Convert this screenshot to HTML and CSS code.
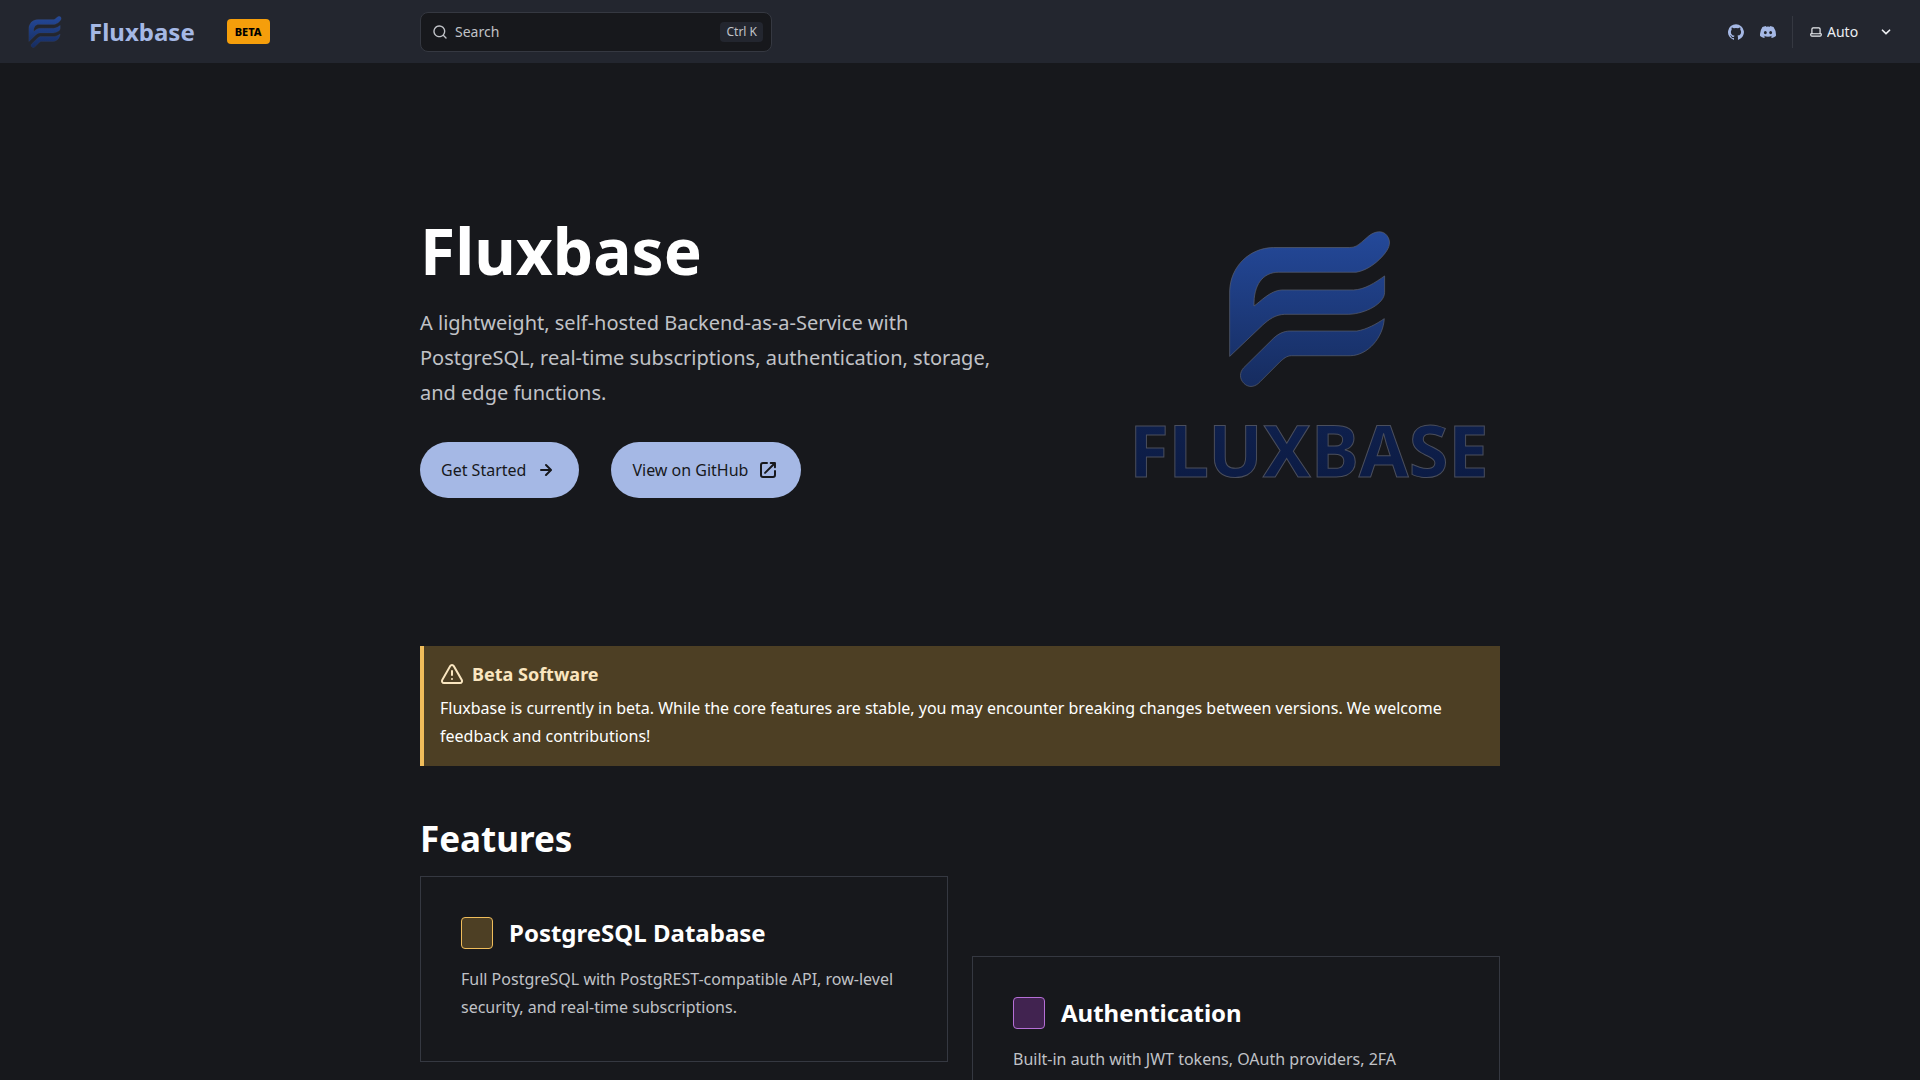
FILE: index.html
```html
<!DOCTYPE html>
<html lang="en">
<head>
  <meta charset="UTF-8" />
  <meta name="viewport" content="width=device-width, initial-scale=1" />
  <title>Fluxbase</title>
  <link rel="stylesheet" href="styles.css">
</head>
<body>

  <!-- logo mark, shared by the header and the hero -->
  <svg class="defs" width="0" height="0" aria-hidden="true">
    <defs>
      <linearGradient id="markFill" gradientUnits="userSpaceOnUse" x1="0" y1="64" x2="0" y2="532">
        <stop offset="0" stop-color="#24499a" />
        <stop offset="1" stop-color="#162c5f" />
      </linearGradient>
      <linearGradient id="wordFill" x1="0" y1="0" x2="0" y2="1">
        <stop offset="0" stop-color="#102250" />
        <stop offset="1" stop-color="#0b1a42" />
      </linearGradient>
      <symbol id="mark" viewBox="86 62 488 472">
        <g fill="url(#markFill)" stroke="#5c6070" stroke-width="2" stroke-linejoin="round">
          <path d="M91 440V244C93 172 149 115 222 114H450C466 114 474 108 486 98L508 79C526 65 549 61 562 78C575 95 570 113 557 130C539 154 506 182 470 188H238C190 188 162 226 164 289C182 277 212 243 246 241H462C496 240 528 218 555 199V248C555 282 498 312 448 314H256C227 315 208 330 190 346Z" />
          <path d="M133 474L222 386C236 373 252 364 272 364H472C502 359 530 343 554 327C551 382 506 437 452 438H276C262 438 252 447 242 456L182 516C168 532 148 535 134 521C120 508 120 488 133 474Z" />
        </g>
      </symbol>
    </defs>
  </svg>

  <header class="header">
    <div class="title-wrapper">
      <a href="/" class="site-title">
        <svg class="site-logo" aria-hidden="true"><use href="#mark" /></svg>
        <span>Fluxbase</span>
      </a>
      <span class="beta-badge">BETA</span>
    </div>

    <div class="search-wrapper">
      <button type="button" class="search">
        <svg width="16" height="16" viewBox="0 0 24 24" fill="currentColor" aria-hidden="true"><path d="M21.71 20.29 18 16.61A9 9 0 1 0 16.61 18l3.68 3.68a.999.999 0 0 0 1.42 0 1 1 0 0 0 0-1.39ZM11 18a7 7 0 1 1 0-14 7 7 0 0 1 0 14Z" /></svg>
        <span class="search-label">Search</span>
        <kbd>Ctrl K</kbd>
      </button>
    </div>

    <div class="right-group">
      <div class="social-icons">
        <a href="#" aria-label="GitHub">
          <svg width="16" height="16" viewBox="0 0 24 24" fill="currentColor"><path d="M12 .3a12 12 0 0 0-3.8 23.38c.6.12.83-.26.83-.57L9 21.07c-3.34.72-4.04-1.61-4.04-1.61-.55-1.39-1.34-1.76-1.34-1.76-1.08-.74.09-.73.09-.73 1.2.09 1.83 1.24 1.83 1.24 1.08 1.83 2.81 1.3 3.5 1 .1-.78.42-1.31.76-1.61-2.67-.3-5.47-1.33-5.47-5.93 0-1.31.47-2.38 1.24-3.22-.14-.3-.54-1.52.1-3.18 0 0 1-.32 3.3 1.23a11.5 11.5 0 0 1 6 0c2.28-1.55 3.29-1.23 3.29-1.23.64 1.66.24 2.88.12 3.18a4.65 4.65 0 0 1 1.23 3.22c0 4.61-2.8 5.63-5.48 5.92.42.36.81 1.1.81 2.22l-.01 3.29c0 .31.2.69.82.57A12 12 0 0 0 12 .3Z" /></svg>
        </a>
        <a href="#" aria-label="Discord">
          <svg width="16" height="16" viewBox="0 0 24 24" fill="currentColor"><path d="M20.32 4.37a19.8 19.8 0 0 0-4.93-1.51 13.78 13.78 0 0 0-.64 1.28 18.27 18.27 0 0 0-5.5 0 12.64 12.64 0 0 0-.64-1.28h-.05A19.74 19.74 0 0 0 3.64 4.4 20.26 20.26 0 0 0 .11 18.09l.02.02a19.9 19.9 0 0 0 6.04 3.03l.04-.02a14.24 14.24 0 0 0 1.23-2.03.08.08 0 0 0-.05-.07 13.1 13.1 0 0 1-1.9-.92.08.08 0 0 1 .02-.1 10.2 10.2 0 0 0 .41-.31h.04a14.2 14.2 0 0 0 12.1 0l.04.01a9.63 9.63 0 0 0 .4.32.08.08 0 0 1-.03.1 12.29 12.29 0 0 1-1.9.91.08.08 0 0 0-.02.1 15.97 15.97 0 0 0 1.24 2.01h.04a19.84 19.84 0 0 0 6.03-3.05v-.03a20.12 20.12 0 0 0-3.57-13.69ZM8.02 15.33c-1.18 0-2.16-1.08-2.16-2.42 0-1.33.96-2.42 2.16-2.42 1.21 0 2.18 1.1 2.16 2.42 0 1.34-.96 2.42-2.16 2.42Zm7.97 0c-1.18 0-2.15-1.08-2.15-2.42 0-1.33.95-2.42 2.15-2.42 1.22 0 2.18 1.1 2.16 2.42 0 1.34-.94 2.42-2.16 2.42Z" /></svg>
        </a>
      </div>
      <label class="theme-select">
        <svg width="14" height="14" viewBox="0 0 24 24" fill="currentColor" aria-hidden="true"><path d="M21 14h-1V7a3 3 0 0 0-3-3H7a3 3 0 0 0-3 3v7H3a1 1 0 0 0-1 1v2a3 3 0 0 0 3 3h14a3 3 0 0 0 3-3v-2a1 1 0 0 0-1-1ZM6 7a1 1 0 0 1 1-1h10a1 1 0 0 1 1 1v7H6V7Zm14 10a1 1 0 0 1-1 1H5a1 1 0 0 1-1-1v-1h16v1Z" /></svg>
        <select aria-label="Select theme">
          <option>Dark</option>
          <option>Light</option>
          <option selected>Auto</option>
        </select>
        <svg class="caret" width="20" height="20" viewBox="0 0 24 24" fill="currentColor" aria-hidden="true"><path d="M17 9.17a1 1 0 0 0-1.41 0L12 12.71 8.46 9.17a1 1 0 1 0-1.41 1.42l4.24 4.24a1.002 1.002 0 0 0 1.42 0L17 10.59a1.002 1.002 0 0 0 0-1.42Z" /></svg>
      </label>
    </div>
  </header>

  <main class="content">
    <section class="hero">
      <div class="hero-copy">
        <h1>Fluxbase</h1>
        <p class="tagline">A lightweight, self-hosted Backend-as-a-Service with PostgreSQL, real-time subscriptions, authentication, storage, and edge functions.</p>
        <div class="actions">
          <a href="#" class="action">
            Get Started
            <svg width="24" height="24" viewBox="0 0 24 24" fill="currentColor" aria-hidden="true"><path d="M17.92 11.62a1.001 1.001 0 0 0-.21-.33l-5-5a1.003 1.003 0 1 0-1.42 1.42l3.3 3.29H7a1 1 0 0 0 0 2h7.59l-3.3 3.29a1.002 1.002 0 0 0 .325 1.639 1 1 0 0 0 1.095-.219l5-5a1 1 0 0 0 .21-.33 1 1 0 0 0 0-.76Z" /></svg>
          </a>
          <a href="#" class="action">
            View on GitHub
            <svg width="24" height="24" viewBox="0 0 24 24" fill="currentColor" aria-hidden="true"><path d="M19.33 10.18a1 1 0 0 1-.77 0 1 1 0 0 1-.62-.93l.01-1.83-8.2 8.2a1 1 0 0 1-1.41-1.42l8.2-8.2H14.7a1 1 0 0 1 0-2h4.25a1 1 0 0 1 1 1v4.25a1 1 0 0 1-.62.93Z" /><path d="M11 4a1 1 0 1 1 0 2H7a1 1 0 0 0-1 1v10a1 1 0 0 0 1 1h10a1 1 0 0 0 1-1v-4a1 1 0 1 1 2 0v4a3 3 0 0 1-3 3H7a3 3 0 0 1-3-3V7a3 3 0 0 1 3-3h4Z" /></svg>
          </a>
        </div>
      </div>
      <svg class="hero-logo" viewBox="0 0 381 286" role="img" aria-label="Fluxbase logo">
        <use href="#mark" x="109" y="18" width="163" height="158" />
        <text x="190" y="265" text-anchor="middle">FLUXBASE</text>
      </svg>
    </section>

    <aside class="caution">
      <p class="caution-title">
        <svg width="24" height="24" viewBox="0 0 24 24" fill="currentColor" aria-hidden="true"><path d="M12 16a1 1 0 1 0 0 2 1 1 0 0 0 0-2m10.67 1.47-8.05-14a3 3 0 0 0-5.24 0l-8 14A3 3 0 0 0 3.94 22h16.12a3 3 0 0 0 2.61-4.53m-1.73 2a1 1 0 0 1-.88.51H3.94a1 1 0 0 1-.88-.51 1 1 0 0 1 0-1l8-14a1 1 0 0 1 1.78 0l8.05 14a1 1 0 0 1 .05 1.02zM12 8a1 1 0 0 0-1 1v4a1 1 0 0 0 2 0V9a1 1 0 0 0-1-1" /></svg>
        Beta Software
      </p>
      <p>Fluxbase is currently in beta. While the core features are stable, you may encounter breaking changes between versions. We welcome feedback and contributions!</p>
    </aside>

    <h2>Features</h2>
    <div class="card-grid">
      <article class="card">
        <h3><span class="card-icon orange"></span>PostgreSQL Database</h3>
        <p>Full PostgreSQL with PostgREST-compatible API, row-level security, and real-time subscriptions.</p>
      </article>
      <article class="card">
        <h3><span class="card-icon purple"></span>Authentication</h3>
        <p>Built-in auth with JWT tokens, OAuth providers, 2FA</p>
      </article>
    </div>
  </main>

</body>
</html>
```

FILE: styles.css
```css
:root {
  --bg: #17181c;
  --nav: #23262f;
  --line: #353841;
  --accent: #a5b8e5;
  --white: #ffffff;
  --gray-1: #eceef2;
  --gray-2: #c0c2c7;
  --content: 1080px;
}

* {
  box-sizing: border-box;
}

body {
  margin: 0;
  background: var(--bg);
  color: var(--gray-2);
  font-family: "Noto Sans", sans-serif;
  font-size: 16px;
  line-height: 28px;
}

h1, h2, h3, p {
  margin: 0;
}

h1, h2, h3 {
  color: var(--white);
  font-weight: 700;
}

a {
  color: var(--accent);
  text-decoration: none;
}

svg {
  flex-shrink: 0;
}

.defs {
  position: absolute;
}

/* header */
.header {
  display: grid;
  grid-template-columns: 1fr minmax(0, var(--content)) 1fr;
  align-items: center;
  height: 64px;
  background: var(--nav);
  border-bottom: 1px solid var(--bg);
}

.title-wrapper {
  display: flex;
  align-items: center;
  gap: 32px;
  padding-left: 25px;
}

.site-title {
  display: flex;
  align-items: center;
  gap: 24px;
  font-size: 24px;
  font-weight: 700;
}

.site-logo {
  width: 40px;
  height: 32px;
}

.beta-badge {
  padding: 0 8px;
  border-radius: 4px;
  background: #f59e0b;
  color: #000;
  font-size: 11px;
  font-weight: 800;
  line-height: 25px;
}

.search {
  display: flex;
  align-items: center;
  gap: 7px;
  width: 352px;
  max-width: 100%;
  height: 40px;
  padding: 0 8px 0 11px;
  border: 1px solid var(--line);
  border-radius: 8px;
  background: var(--bg);
  color: var(--gray-2);
  font-family: inherit;
  font-size: 14px;
}

.search kbd {
  margin-left: auto;
  padding: 0 6px;
  border-radius: 4px;
  background: var(--nav);
  font-family: inherit;
  font-size: 12px;
  line-height: 20px;
}

.right-group {
  display: flex;
  justify-content: flex-end;
  align-items: center;
  gap: 16px;
  padding-right: 24px;
}

.social-icons {
  display: flex;
  align-items: center;
  gap: 16px;
  height: 32px;
  padding-right: 16px;
  border-right: 1px solid var(--line);
}

.social-icons a {
  display: flex;
}

.theme-select {
  display: flex;
  align-items: center;
  color: var(--gray-1);
}

.theme-select select {
  appearance: none;
  width: 73px;
  margin-right: -20px;
  padding: 0 0 0 4px;
  border: 0;
  background: transparent;
  color: inherit;
  font-family: inherit;
  font-size: 14px;
}

.caret {
  pointer-events: none;
}

/* hero */
.content {
  max-width: var(--content);
  margin: 0 auto;
  padding: 24px 0;
}

.hero {
  display: grid;
  grid-template-columns: 7fr 4fr;
  align-items: center;
  gap: 3%;
  padding: 124px 0;
  margin-bottom: 24px;
}

h1 {
  margin-bottom: 16px;
  font-size: 64px;
  line-height: 77px;
}

.tagline {
  max-width: 50ch;
  font-size: 20px;
  line-height: 35px;
}

.actions {
  display: flex;
  flex-wrap: wrap;
  gap: 32px;
  margin-top: 32px;
}

.action {
  display: flex;
  align-items: center;
  gap: 8px;
  height: 56px;
  padding: 0 21px;
  border-radius: 28px;
  background: var(--accent);
  color: var(--bg);
}

.hero-logo {
  width: 100%;
}

.hero-logo text {
  fill: url(#wordFill);
  stroke: #4a4e5c;
  stroke-width: 1px;
  font-size: 72px;
  font-weight: 700;
}

/* beta notice */
.caution {
  padding: 16px;
  border-left: 4px solid #f0bd5b;
  background: #4d3f24;
  color: var(--white);
}

.caution-title {
  display: flex;
  align-items: center;
  gap: 8px;
  margin-bottom: 8px;
  color: #fae6c0;
  font-size: 18px;
  font-weight: 700;
  line-height: 24px;
}

/* features */
h2 {
  margin: 52px 0 16px;
  font-size: 35px;
  line-height: 42px;
}

.card-grid {
  display: grid;
  grid-template-columns: 1fr 1fr;
  align-items: start;
  gap: 24px;
}

.card {
  min-height: 186px;
  padding: 40px;
  border: 1px solid var(--line);
}

.card:nth-child(even) {
  margin-top: 80px;
}

.card h3 {
  display: flex;
  align-items: center;
  gap: 16px;
  margin-bottom: 16px;
  font-size: 24px;
  line-height: 32px;
}

.card-icon {
  width: 32px;
  height: 32px;
  border: 1px solid;
  border-radius: 4px;
}

.orange {
  border-color: #f0bd5b;
  background: #4d3f24;
}

.purple {
  border-color: #b56fd6;
  background: #412350;
}
```
